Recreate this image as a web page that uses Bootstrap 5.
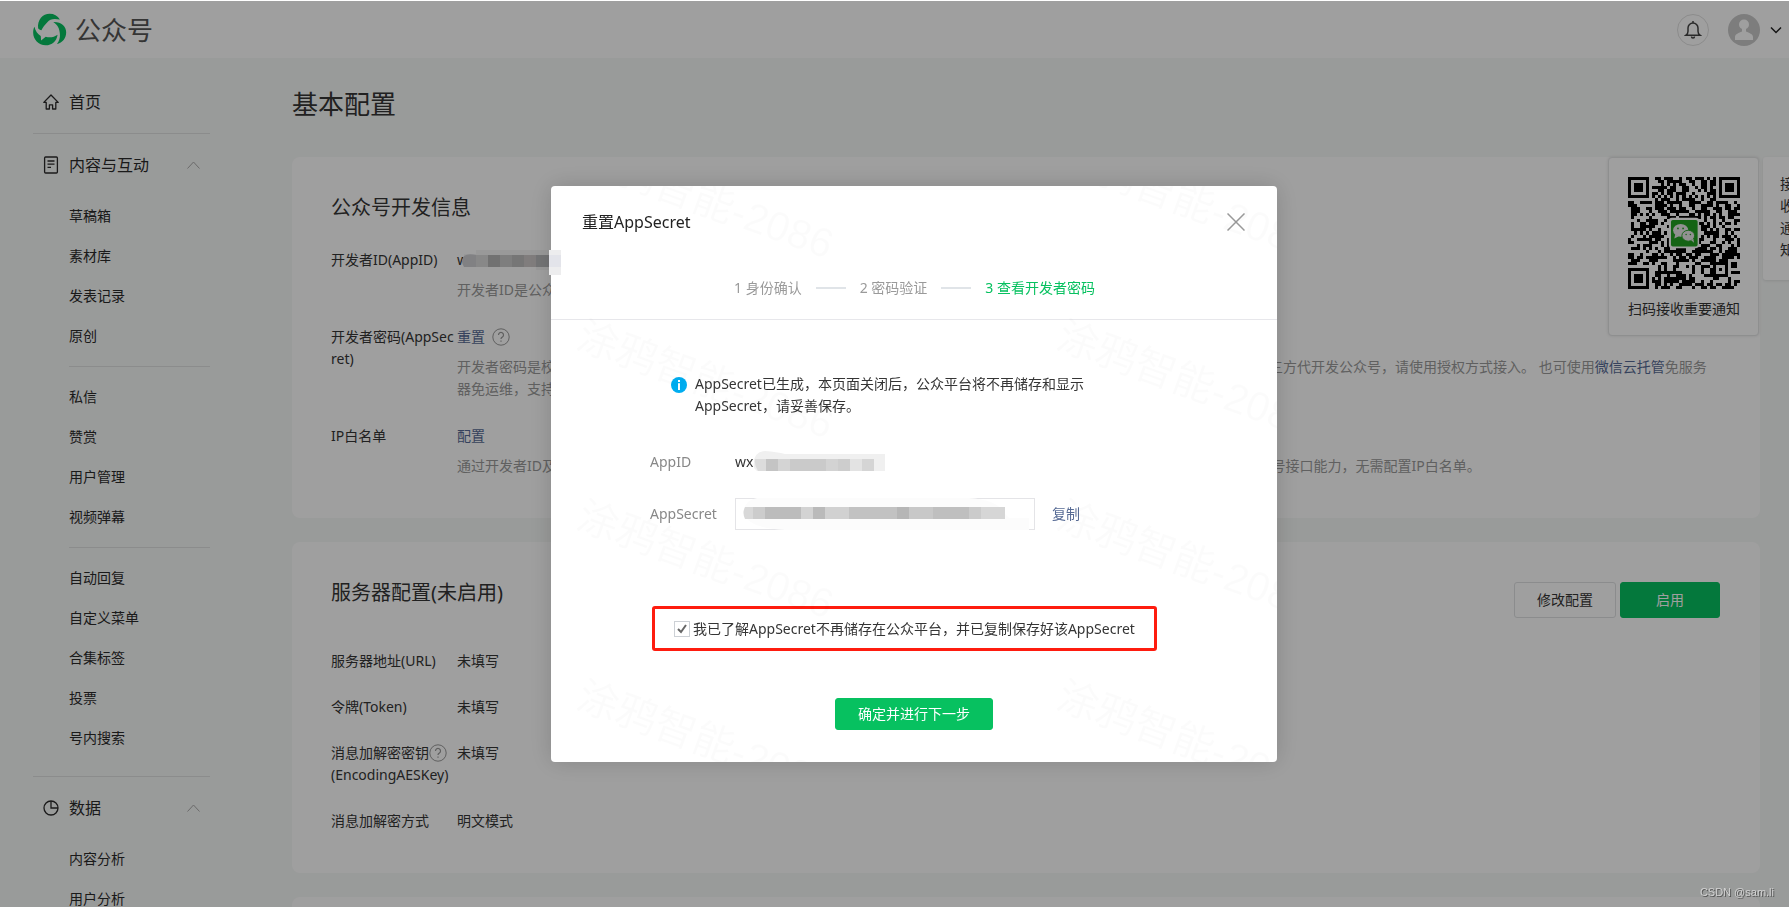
<!DOCTYPE html>
<html lang="zh-CN">
<head>
<meta charset="utf-8">
<meta name="viewport" content="width=device-width, initial-scale=1">
<title>公众号 - 基本配置</title>
<link href="https://cdn.jsdelivr.net/npm/bootstrap@5.3.0/dist/css/bootstrap.min.css" rel="stylesheet">
<style>
  :root { --wx-green: #07c160; --wx-link: #576b95; --wx-hint: #9a9a9a; --wx-text: #353535; }
  body { font-family: "Noto Sans", "Noto Sans CJK SC", sans-serif; font-size: 14px; line-height: 22px; color: var(--wx-text); background: #f6f8f7; height: 100vh; overflow: hidden; position: relative; border-top: 1px solid #fff; }
  a { color: var(--wx-link); text-decoration: none; }
  svg { display: block; flex: none; }

  .topbar { height: 57px; background: #fff; padding: 0 7px 0 33px; }
  .brand { gap: 8px; }
  .brand-name { font-size: 26px; line-height: 36px; color: #555; }
  .bell-btn { width: 32px; height: 32px; border: 1px solid #e0e0e0; background: none; }
  .account { gap: 9px; }

  .side { width: 292px; flex: none; padding: 32px 82px 0 33px; }
  .side a { color: #2b2b2b; }
  .side-head { font-size: 16px; line-height: 24px; padding: 0 10px; gap: 10px; }
  .side-list { margin-top: 19px; }
  .side-list a { display: block; line-height: 40px; padding-left: 36px; }
  .rule { height: 1px; background: #dfe1e0; margin: 19px 0; }
  .side-list + .rule { margin-top: 18px; }
  .rule-inner { height: 1px; background: #dfe1e0; margin: 10px 0 10px 36px; }

  .content { padding: 26px 29px 0 0; min-width: 0; }
  .page-title { font-size: 26px; line-height: 40px; margin: 0 0 33px; font-weight: 400; }
  .panel { background: #fff; border-radius: 8px; padding: 36px 40px 41px 39px; margin-bottom: 24px; }
  .panel h2 { font-size: 20px; line-height: 30px; margin: 0; font-weight: 400; }
  .cfg-list { display: flex; flex-direction: column; gap: 24px; padding-top: 32px; }
  .cfg-list.noted { gap: 25px; padding-top: 26px; }
  .cfg { margin: 0; }
  .cfg dt { width: 126px; flex: none; font-weight: 400; word-break: break-all; }
  .cfg dd { margin: 0; min-width: 0; }
  .hint { color: var(--wx-hint); margin: 8px 0 0; }
  .btn-wx { font-size: 14px; line-height: 22px; border-radius: 3px; padding: 6px 12px; min-width: 100px; color: #fff; background: var(--wx-green); border: 1px solid var(--wx-green); }
  .btn-plain { color: var(--wx-text); background: #fff; border-color: #dfe1e3; min-width: 102px; }
  .help { border: 0; padding: 0; background: none; }

  .qr-card { position: absolute; top: 156px; right: 30px; width: 151px; height: 179px; padding: 19px 17px 0 19px; background: #fff; border: 1px solid #e4e5e6; border-radius: 4px; box-shadow: 0 0 3px rgba(0,0,0,.12); }
  .qr-tip { position: absolute; top: 156px; right: -18px; width: 44px; height: 123px; padding: 16px 8px 0 17px; background: #fff; border-radius: 3px; box-shadow: 0 1px 3px rgba(0,0,0,.1); word-break: break-all; }

  .modal-backdrop { opacity: .376 !important; top: 1px; height: 100%; }
  .modal { padding: 41px 0 0 39px; overflow: hidden; }
  .modal-dialog { max-width: 726px; }
  .modal-content { border: 0; border-radius: 4px; color: var(--wx-text); box-shadow: 0 0 24px rgba(0,0,0,.16); }
  .dlg-head { padding: 24px 30px 20px 31px; border-bottom: 1px solid #e7e7eb; }
  .dlg-title { font-size: 16px; line-height: 24px; font-weight: 400; color: #222; margin: 0; }
  .dlg-close { border: 0; background: none; padding: 3px 2px 3px; }
  .steps { gap: 14px; margin: 43px 0 0; padding: 0; list-style: none; color: var(--wx-hint); }
  .steps .bar { width: 30px; height: 2px; background: #e0e4e8; }
  .steps .on { color: var(--wx-green); }
  .dlg-body { padding: 53px 99px 32px; }
  .notice { gap: 8px; padding-left: 21px; max-width: 445px; }
  .field-row { margin-top: 34px; }
  .field-row + .field-row { margin-top: 25px; }
  .field-label { width: 85px; flex: none; color: #888; }
  .secret-box { width: 300px; height: 32px; border: 1px solid #e4e4e7; border-radius: 0; padding: 0 8px; background: #fff; }
  .copy { margin-left: 17px; }
  .confirm { margin: 76px 18px 47px 2px; border: 3px solid #fe1c0f; border-radius: 3px; height: 45px; padding-left: 19px; gap: 3px; width: 505px; }
  .tick { appearance: none; width: 16px; height: 16px; margin: 0; border: 1px solid #cdd1d6; background: #fff url("data:image/svg+xml,%3Csvg xmlns='http://www.w3.org/2000/svg' viewBox='0 0 14 14'%3E%3Cpath d='M3 7l3 3 5-7' fill='none' stroke='%23666' stroke-width='2'/%3E%3C/svg%3E") center/14px; }
  .btn-next { padding: 4px 12px; width: 158px; }
  .over { position: absolute; }
  .stamps { position: absolute; inset: 0; overflow: hidden; pointer-events: none; border-radius: 4px; }
  .stamps-grid { display: grid; grid-template-columns: 480px 480px; grid-auto-rows: 180px; margin-top: -122px; }
  .stamps-grid span { padding-left: 28px; align-self: center; white-space: nowrap; font: 41px/48px "Liberation Sans", "Noto Sans CJK SC", sans-serif; color: rgba(0,0,0,.016); transform: rotate(20deg); transform-origin: 28px 50%; }
  .credit { position: fixed; right: 15px; bottom: 6px; z-index: 1070; font: 11px/18px "Liberation Sans", sans-serif; color: #d2d2d2; text-shadow: 1px 1px 0 #555; }
</style>
</head>
<body>

<header class="topbar d-flex align-items-center">
  <a href="#" class="brand d-flex align-items-center">
    <svg width="34" height="33" viewBox="99 40 102 100" fill="#07c160"><path d="M114 86C111 60 128 42 149 42c13 0 24 6 31 18-20-4-30-1-38 8-8 8-13 15-18 24-4-1-8-3-10-6z"/><path d="M160 67c24-1 39 13 39 31 0 18-11 32-28 36 7-8 10-19 9-30-1-16-6-28-20-37z"/><path d="M103 82c3 14 9 22 19 28l1 13 14-11c13 4 26 1 36-6-3 20-17 32-36 32-22 0-38-18-38-38 0-7 1-13 4-18z"/></svg>
    <span class="brand-name">公众号</span>
  </a>
  <div class="ms-auto d-flex align-items-center">
    <button type="button" class="bell-btn rounded-circle d-flex align-items-center justify-content-center p-0" aria-label="通知">
      <svg width="18" height="20" viewBox="0 0 18 20" fill="none" stroke="#444" stroke-width="1.5"><path d="M9 1v2M2 15.200c1.500-1 2-2 2-4V8a5 5 0 0 1 10 0v3.200c0 2 .5 3 2 4zM7.500 16.500a1.500 1.500 0 0 0 3 0"/></svg>
    </button>
    <button type="button" class="account border-0 bg-transparent d-flex align-items-center p-0 ms-3" aria-label="账号">
      <svg width="36" height="32" viewBox="-2 0 36 32"><circle cx="17" cy="16" r="16" fill="#c9c9c9"/><circle cx="17" cy="10.500" r="5" fill="#fff"/><path d="M8 26v-3c0-3 4-4 7-5.500v-4h4v4c3 1.500 7 2.500 7 5.500v3z" fill="#fff"/></svg>
      <svg width="12" height="8" viewBox="0 0 12 8" fill="none" stroke="#222" stroke-width="1.500"><path d="M1 1.500l5 5 5-5"/></svg>
    </button>
  </div>
</header>

<div class="d-flex">
  <nav class="side">
    <a href="#" class="side-head d-flex align-items-center">
      <svg width="16" height="16" viewBox="0 0 16 16" fill="none" stroke="#2b2b2b" stroke-width="1.300" stroke-linejoin="round"><path d="M8 1L.8 8.400h2.400V15h3.200v-4.200h3.200V15h3.200V8.400h2.400z"/></svg>
      首页</a>
    <div class="rule"></div>
    <a href="#" class="side-head d-flex align-items-center">
      <svg width="16" height="18" viewBox="0 0 16 18" fill="none" stroke="#2b2b2b" stroke-width="1.300"><rect x="1.600" y="1" width="12.800" height="16" rx="1"/><path d="M4.500 5h7M4.500 8.200h7M4.500 11.400h3.500"/></svg>
      内容与互动
      <svg class="ms-auto" width="13" height="8" viewBox="0 0 13 8" fill="none" stroke="#aaa"><path d="M.5 7.500l6-6.500 6 6.500"/></svg></a>
    <div class="side-list">
      <a href="#">草稿箱</a><a href="#">素材库</a><a href="#">发表记录</a><a href="#">原创</a>
      <div class="rule-inner"></div>
      <a href="#">私信</a><a href="#">赞赏</a><a href="#">用户管理</a><a href="#">视频弹幕</a>
      <div class="rule-inner"></div>
      <a href="#">自动回复</a><a href="#">自定义菜单</a><a href="#">合集标签</a><a href="#">投票</a><a href="#">号内搜索</a>
    </div>
    <div class="rule"></div>
    <a href="#" class="side-head d-flex align-items-center">
      <svg width="16" height="16" viewBox="0 0 16 16" fill="none" stroke="#2b2b2b" stroke-width="1.300"><circle cx="8" cy="8" r="7"/><path d="M8 1v7h7"/></svg>
      数据
      <svg class="ms-auto" width="13" height="8" viewBox="0 0 13 8" fill="none" stroke="#aaa"><path d="M.5 7.500l6-6.500 6 6.500"/></svg></a>
    <div class="side-list">
      <a href="#">内容分析</a><a href="#">用户分析</a>
    </div>
  </nav>

  <main class="content flex-grow-1">
    <h1 class="page-title">基本配置</h1>

    <section class="panel">
      <h2>公众号开发信息</h2>
      <div class="cfg-list noted">
        <dl class="cfg d-flex">
          <dt>开发者ID(AppID)</dt>
          <dd><div class="d-flex align-items-center"><span>w</span>
            <svg width="96" height="26" viewBox="0 0 96 26" style="margin:-2px 0 -2px -6px"><path fill="#f0f0f0" d="M14 3h82v20H74v-4H2V7h12z" opacity=".6"/><path fill="#cfcfd3" d="M2 9q4-3 12-1h2v12H2q-4-6 0-11z"/><path fill="#dadada" d="M14 8h14v12H14z"/><path fill="#b5b5b5" d="M26 8h12v12H26z"/><path fill="#cbcbcb" d="M38 8h12v12H38z"/><path fill="#bdbdbd" d="M50 8h12v12H50z"/><path fill="#cdc9c9" d="M62 8h12v12H62z"/><path fill="#b9babc" d="M74 8h22v12H74z"/></svg></div>
            <p class="hint">开发者ID是公众号开发识别码，配合开发者密码可调用公众号的接口能力。</p></dd>
        </dl>
        <dl class="cfg d-flex">
          <dt>开发者密码(AppSecret)</dt>
          <dd><div class="d-flex align-items-center" style="gap:7px"><a href="#">重置</a>
            <button type="button" class="help" aria-label="帮助"><svg width="18" height="18" viewBox="0 0 18 18" fill="none" stroke="#999"><circle cx="9" cy="9" r="8.200"/><path d="M6.500 7a2.500 2.500 0 1 1 3.800 2.100Q9 9.800 9 11M9 12.400v1.400" stroke-width="1.200"/></svg></button></div>
            <p class="hint">开发者密码是校验公众号开发者身份的密码，具有极高的安全性。切记勿把密码直接交给第三方开发者或直接存储在代码中。如需第三方代开发公众号，请使用授权方式接入。 也可使用<a href="#">微信云托管</a>免服务器免运维，支持公众号一键部署。</p></dd>
        </dl>
        <dl class="cfg d-flex">
          <dt>IP白名单</dt>
          <dd><a href="#">配置</a>
            <p class="hint">通过开发者ID及密码调用获取access_token接口时，需要设置访问来源IP为白名单。如使用微信云托管部署服务，则可直接调用公众号接口能力，无需配置IP白名单。</p></dd>
        </dl>
      </div>
    </section>

    <section class="panel">
      <div class="d-flex align-items-start justify-content-between">
        <h2>服务器配置(未启用)</h2>
        <div class="d-flex pt-1 gap-1">
          <button type="button" class="btn btn-wx btn-plain">修改配置</button>
          <button type="button" class="btn btn-wx">启用</button>
        </div>
      </div>
      <div class="cfg-list">
        <dl class="cfg d-flex"><dt>服务器地址(URL)</dt><dd>未填写</dd></dl>
        <dl class="cfg d-flex"><dt>令牌(Token)</dt><dd>未填写</dd></dl>
        <dl class="cfg d-flex"><dt><span class="d-flex align-items-center">消息加解密密钥<button type="button" class="help" aria-label="帮助"><svg width="18" height="18" viewBox="0 0 18 18" fill="none" stroke="#999"><circle cx="9" cy="9" r="8.200"/><path d="M6.500 7a2.500 2.500 0 1 1 3.800 2.100Q9 9.800 9 11M9 12.400v1.400" stroke-width="1.200"/></svg></button></span>(EncodingAESKey)</dt><dd>未填写</dd></dl>
        <dl class="cfg d-flex"><dt>消息加解密方式</dt><dd>明文模式</dd></dl>
      </div>
    </section>

    <section class="panel" aria-label="更多配置"></section>
  </main>
</div>

<aside class="qr-card">
  <svg id="qr" width="112" height="112" viewBox="0 0 37 37" shape-rendering="crispEdges" role="img" aria-label="二维码"></svg>
  <div class="text-nowrap" style="margin-top:9px">扫码接收重要通知</div>
</aside>
<aside class="qr-tip">接收通知</aside>

<div class="modal-backdrop show"></div>

<div class="modal show d-block" tabindex="-1" role="dialog" aria-labelledby="dlgTitle">
  <div class="modal-dialog modal-dialog-centered">
    <div class="modal-content">
      <div class="stamps" aria-hidden="true"><div class="stamps-grid">
        <span>涂鸦智能-2086</span><span>涂鸦智能-2086</span><span>涂鸦智能-2086</span><span>涂鸦智能-2086</span>
        <span>涂鸦智能-2086</span><span>涂鸦智能-2086</span><span>涂鸦智能-2086</span><span>涂鸦智能-2086</span>
      </div></div>
      <svg class="over" style="left:-2px;top:64px" width="12" height="25" viewBox="0 0 12 25"><path fill="#ededee" d="M0 0h12v25H0z"/><path fill="#e3e4ea" d="M0 5h12v12H0z"/></svg>

      <div class="dlg-head">
        <div class="d-flex justify-content-between align-items-center">
          <h3 class="dlg-title" id="dlgTitle">重置AppSecret</h3>
          <button type="button" class="dlg-close" aria-label="关闭"><svg width="18" height="18" viewBox="0 0 18 18" stroke="#999" stroke-width="1.500"><path d="M.5.5l17 17M17.500.5l-17 17"/></svg></button>
        </div>
        <ol class="steps d-flex justify-content-center align-items-center">
          <li>1 身份确认</li><li class="bar"></li><li>2 密码验证</li><li class="bar"></li><li class="on">3 查看开发者密码</li>
        </ol>
      </div>

      <div class="dlg-body">
        <div class="notice d-flex">
          <svg class="mt-1" width="16" height="16" viewBox="0 0 16 16"><circle cx="8" cy="8" r="8" fill="#00adf0"/><path fill="#fff" d="M7 3h2v2H7zM7 6.300h2V13H7z"/></svg>
          <div>AppSecret已生成，本页面关闭后，公众平台将不再储存和显示AppSecret，请妥善保存。</div>
        </div>
        <div class="field-row d-flex align-items-center">
          <span class="field-label">AppID</span><span>wx</span>
          <svg width="132" height="22" viewBox="0 0 132 22" style="margin-top:-3px"><path fill="#f0f0f0" d="M1 18Q-1 2 12 1q12 1 20 3h100v17H4z"/><path fill="#dcdcdc" d="M2 9h11v12H5q-4-6-3-12z"/><path fill="#c4c4c4" d="M13 9h12v12H13z"/><path fill="#d4d4d4" d="M25 9h12v12H25z"/><path fill="#cacaca" d="M37 9h36v12H37z"/><path fill="#d3d3d3" d="M73 9h12v12H73z"/><path fill="#cdcdcd" d="M85 9h12v12H85z"/><path fill="#e3e3e3" d="M97 9h12v12H97z"/><path fill="#d5d5d5" d="M109 9h12v12h-12z"/></svg>
        </div>
        <div class="field-row d-flex align-items-center">
          <label class="field-label" for="secret">AppSecret</label>
          <div class="position-relative">
            <input class="secret-box d-block" id="secret" type="text" readonly>
            <svg class="over" style="left:0;top:0" width="300" height="32" viewBox="0 0 300 32"><path fill="#fcfcfc" d="M8 14Q10 2 22 0h212q30 2 36 16l4 4h20v12H50Q12 30 8 14z"/><path fill="#d8d8d8" d="M10 9h9v12h-9q-3-6 0-12z"/><path fill="#ccc" d="M18 9h12v12H18z"/><path fill="#bcbcbc" d="M30 9h36v12H30z"/><path fill="#d3d3d3" d="M66 9h12v12H66z"/><path fill="#bababa" d="M78 9h12v12H78z"/><path fill="#d1d1d1" d="M90 9h24v12H90z"/><path fill="#c2c2c2" d="M114 9h48v12h-48z"/><path fill="#b6b6b6" d="M162 9h12v12h-12z"/><path fill="#c8c8c8" d="M174 9h24v12h-24z"/><path fill="#bfbfbf" d="M198 9h36v12h-36z"/><path fill="#cbcbcb" d="M234 9h12v12h-12z"/><path fill="#d6d6d6" d="M246 9h24v12h-24z"/></svg>
          </div>
          <a href="#" class="copy">复制</a>
        </div>
        <div class="confirm d-flex align-items-center">
          <input class="tick" type="checkbox" id="agree" checked>
          <label for="agree" class="text-nowrap">我已了解AppSecret不再储存在公众平台，并已复制保存好该AppSecret</label>
        </div>
        <button type="button" class="btn btn-wx btn-next d-block mx-auto">确定并进行下一步</button>
      </div>
    </div>
  </div>
</div>

<div class="credit">CSDN @sam.li</div>

<script src="https://cdn.jsdelivr.net/npm/bootstrap@5.3.0/dist/js/bootstrap.bundle.min.js"></script>
<script>
  // Draws the notification code: finder squares, timing lines, alignment mark and data modules.
  (function () {
    var n = 37, seed = 2086, d = '';
    function rnd() { seed = (seed * 1103515245 + 12345) % 2147483648; return seed / 2147483648; }
    function ring(x, y, cx, cy, r) { return Math.max(Math.abs(x - cx), Math.abs(y - cy)) <= r; }
    function finder(x, y, cx, cy) { var m = Math.max(Math.abs(x - cx), Math.abs(y - cy)); return m === 3 || m <= 1; }
    for (var y = 0; y < n; y++) for (var x = 0; x < n; x++) {
      var on = rnd() > 0.48, m;
      if (ring(x, y, 3, 3, 4)) on = finder(x, y, 3, 3);
      else if (ring(x, y, 33, 3, 4)) on = finder(x, y, 33, 3);
      else if (ring(x, y, 3, 33, 4)) on = finder(x, y, 3, 33);
      else if (ring(x, y, 30, 30, 2)) { m = Math.max(Math.abs(x - 30), Math.abs(y - 30)); on = m !== 1; }
      else if (x === 6 || y === 6) on = (x + y) % 2 === 0;
      if (on) d += 'M' + x + ' ' + y + 'h1v1h-1z';
    }
    document.getElementById('qr').innerHTML = '<path d="' + d + '"/>' +
      '<g shape-rendering="auto"><rect x="13.500" y="13.500" width="10" height="10" rx="1" fill="#fff"/><rect x="14.200" y="14.200" width="8.800" height="8.800" rx=".6" fill="#23a023"/>' +
      '<ellipse cx="17.400" cy="17.600" rx="2.500" ry="2.100" fill="#e8e8e8"/><path d="M15.600 19l-.3 1.300 1.500-.7z" fill="#e8e8e8"/><ellipse cx="19.900" cy="19.400" rx="2.100" ry="1.800" fill="#e8e8e8" stroke="#23a023" stroke-width=".3"/><path d="M20.800 20.800l1 .9-.2-1.300z" fill="#e8e8e8"/>' +
      '<circle cx="16.500" cy="17" r=".3" fill="#23a023"/><circle cx="18.200" cy="17" r=".3" fill="#23a023"/><circle cx="19.200" cy="19" r=".25" fill="#23a023"/><circle cx="20.600" cy="19" r=".25" fill="#23a023"/></g>';
  })();
</script>
</body>
</html>
